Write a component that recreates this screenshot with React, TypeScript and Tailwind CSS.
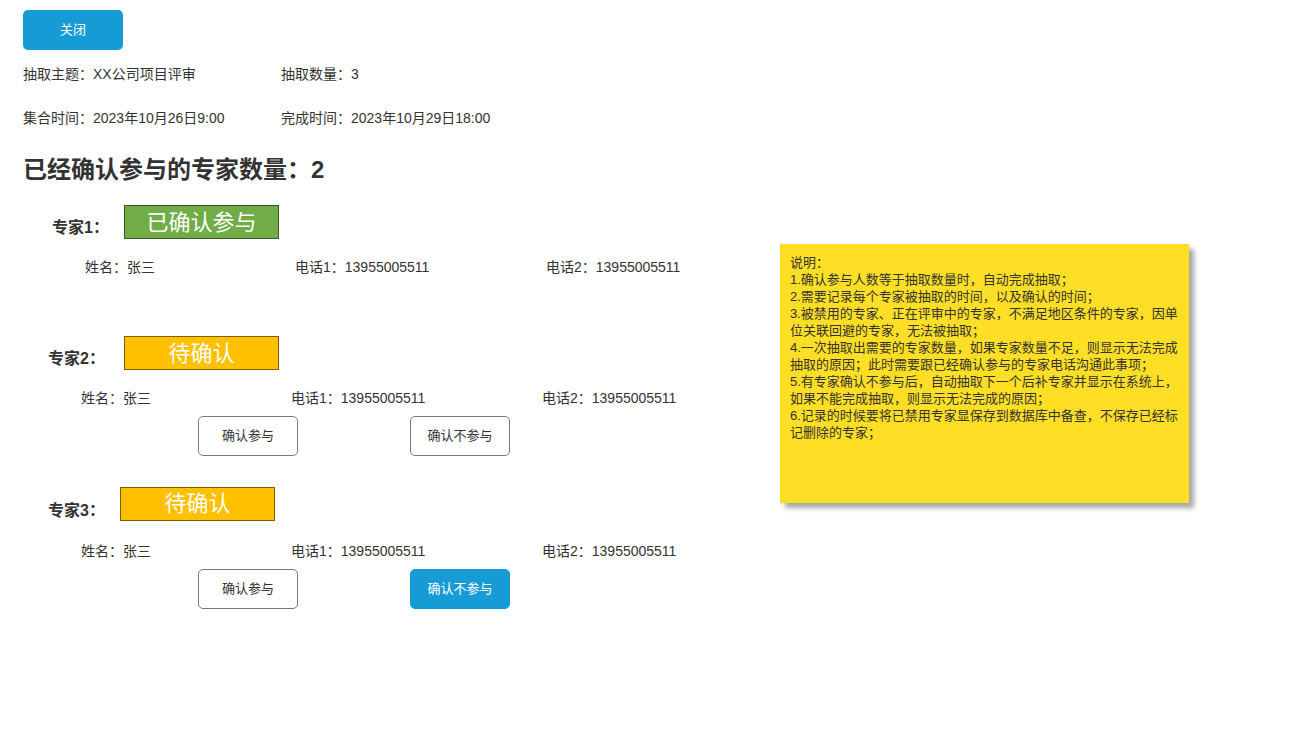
const experts = [
  {
    name: "专家1：",
    status: "已确认参与",
    confirmed: true,
    labelPad: "pl-[52px]",
    labelW: "w-[72px]",
    labelTop: "mt-[11px]",
    infoPad: "pl-[85px]",
    top: "mt-[20px]",
    infoTop: "mt-[19px]",
    actions: false,
    declineActive: false,
  },
  {
    name: "专家2：",
    status: "待确认",
    confirmed: false,
    labelPad: "pl-[48px]",
    labelW: "w-[76px]",
    labelTop: "mt-[11px]",
    infoPad: "pl-[81px]",
    top: "mt-[60px]",
    infoTop: "mt-[19px]",
    actions: true,
    declineActive: false,
  },
  {
    name: "专家3：",
    status: "待确认",
    confirmed: false,
    labelPad: "pl-[48px]",
    labelW: "w-[72px]",
    labelTop: "mt-[15px]",
    infoPad: "pl-[81px]",
    top: "mt-[29px]",
    infoTop: "mt-[20px]",
    actions: true,
    declineActive: true,
  },
];

const notes = [
  "说明：",
  "1.确认参与人数等于抽取数量时，自动完成抽取；",
  "2.需要记录每个专家被抽取的时间，以及确认的时间；",
  "3.被禁用的专家、正在评审中的专家，不满足地区条件的专家，因单位关联回避的专家，无法被抽取；",
  "4.一次抽取出需要的专家数量，如果专家数量不足，则显示无法完成抽取的原因；此时需要跟已经确认参与的专家电话沟通此事项；",
  "5.有专家确认不参与后，自动抽取下一个后补专家并显示在系统上，如果不能完成抽取，则显示无法完成的原因；",
  "6.记录的时候要将已禁用专家显保存到数据库中备查，不保存已经标记删除的专家；",
];

function Expert({ e }: { e: (typeof experts)[number] }) {
  return (
    <div className={e.top}>
      <div className={`flex items-center ${e.labelPad}`}>
        <span
          className={`shrink-0 whitespace-nowrap text-[16px] font-bold leading-[22px] text-[#333] ${e.labelW} ${e.labelTop}`}
        >
          {e.name}
        </span>
        <span
          className={`flex h-[34px] w-[155px] items-center justify-center border text-[22px] text-white ${
            e.confirmed
              ? "border-[#385723] bg-[#70ad47]"
              : "border-[#7f6000] bg-[#ffc000]"
          }`}
        >
          {e.status}
        </span>
      </div>
      <div className={`flex text-[14px] leading-[18px] text-[#333] ${e.infoTop} ${e.infoPad}`}>
        <span className="w-[210px]">姓名：张三</span>
        <span className="w-[251px]">电话1：13955005511</span>
        <span>电话2：13955005511</span>
      </div>
      {e.actions && (
        <div className="mt-[9px] flex pl-[198px]">
          <button className="h-[40px] w-[100px] rounded-[5px] border border-[#797979] bg-white text-[13px] text-[#333]">
            确认参与
          </button>
          <button
            className={`ml-[112px] h-[40px] w-[100px] rounded-[5px] border text-[13px] ${
              e.declineActive
                ? "border-[#169bd5] bg-[#169bd5] text-white"
                : "border-[#797979] bg-white text-[#333]"
            }`}
          >
            确认不参与
          </button>
        </div>
      )}
    </div>
  );
}

export default function App() {
  return (
    <div
      className="flex min-h-[748px] w-[1292px] bg-white"
      style={{ fontFamily: '"Liberation Sans", Arial, "Noto Sans CJK SC", sans-serif' }}
    >
      <div className="w-[780px] shrink-0">
        <div className="pl-[23px] pt-[10px]">
          <button className="h-[40px] w-[100px] rounded-[5px] bg-[#169bd5] text-[13px] text-white">
            关闭
          </button>
          <div className="mt-[15px] flex text-[14px] leading-[18px] text-[#333]">
            <span className="w-[258px]">抽取主题：XX公司项目评审</span>
            <span>抽取数量：3</span>
          </div>
          <div className="mt-[26px] flex text-[14px] leading-[18px] text-[#333]">
            <span className="w-[258px]">集合时间：2023年10月26日9:00</span>
            <span>完成时间：2023年10月29日18:00</span>
          </div>
          <h2 className="mt-[28px] text-[24px] font-bold leading-[30px] text-[#333]">
            已经确认参与的专家数量：2
          </h2>
        </div>
        {experts.map((e) => (
          <Expert key={e.name} e={e} />
        ))}
      </div>

      {/* 说明 note */}
      <div className="mt-[244px] h-[259px] w-[409px] self-start bg-[#ffdf25] px-[10px] pt-[10px] text-[13px] leading-[17px] text-[#333] shadow-[5px_5px_5px_rgba(0,0,0,0.35)]">
        {notes.map((n) => (
          <p key={n}>{n}</p>
        ))}
      </div>
    </div>
  );
}
